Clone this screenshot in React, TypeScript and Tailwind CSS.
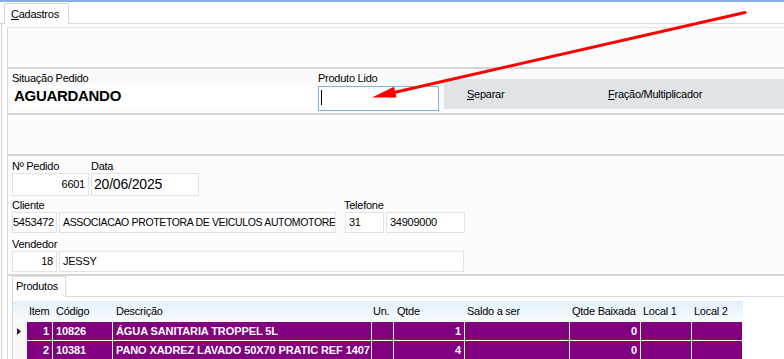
import React from 'react'

const line = 'border-[#d9d9d9]'

function Field(props: { className: string; children?: React.ReactNode }) {
  return (
    <div className={`border border-[#e3e3e3] bg-white overflow-hidden whitespace-nowrap flex items-center ${props.className}`}>
      {props.children}
    </div>
  )
}

const cols = 'grid grid-cols-[13px_26px_60px_259px_22px_71px_105px_71px_51px_51px]'

const rows = [
  { item: '1', codigo: '10826', descricao: 'ÁGUA SANITARIA TROPPEL 5L', qtde: '1', baixada: '0', current: true },
  { item: '2', codigo: '10381', descricao: 'PANO XADREZ LAVADO 50X70 PRATIC REF 1407', qtde: '4', baixada: '0', current: false },
]

export default function App() {
  return (
    <div className="relative w-[784px] h-[359px] overflow-hidden bg-white text-black text-[11px] tracking-[-0.25px] font-['Liberation_Sans',Arial,sans-serif] flex flex-col">
      <div className="h-[2px] bg-[#86b1dc] shrink-0" />

      {/* main tab strip */}
      <div className={`h-[22px] shrink-0 flex items-end pl-[4px] border-b ${line}`}>
        <div className={`h-[21px] w-[65px] -mb-px bg-white border-l border-t border-r ${line} pl-[6px] leading-[20px]`}>
          <span className="underline underline-offset-[1px]">C</span>adastros
        </div>
      </div>

      <div className={`flex-1 ml-[1px] border-l ${line} pl-[5px] pt-[3px] flex flex-col`}>
        <div className={`flex-1 border-l ${line} flex flex-col`}>
          {/* panel A */}
          <div className="h-[42px] shrink-0 border-t border-[#e4e4e4] border-b-2 border-b-[#d6d6d6] bg-[#fcfcfc]" />

          {/* panel B */}
          <div className="h-[46px] shrink-0 border-b-2 border-[#d6d6d6] bg-[#fafafa] flex">
            <div className="w-[310px] pl-[4px] pt-[2px] flex flex-col">
              <div className="h-[14px] leading-[14px]">Situação Pedido</div>
              <div className="h-[26px] w-[304px] bg-white pl-[2px] pt-[1px] leading-[20px] text-[15px] font-bold tracking-[-0.3px]">
                AGUARDANDO
              </div>
            </div>
            <div className="w-[121px] pt-[2px] flex flex-col">
              <div className="h-[14px] leading-[14px]">Produto Lido</div>
              <div className="mt-[1px] h-[25px] border border-[#7ab6ea] bg-white pl-[2px] pt-[3px]">
                <div className="w-px h-[15px] bg-black" />
              </div>
            </div>
            <div className="ml-[5px] mt-[10px] h-[30px] flex-1 bg-[#e1e4e7] flex items-center">
              <div className="w-[164px] pl-[23px]">
                <span className="underline underline-offset-[1px]">S</span>eparar
              </div>
              <div>
                <span className="underline underline-offset-[1px]">F</span>ração/Multiplicador
              </div>
            </div>
          </div>

          {/* panel C */}
          <div className="h-[41px] shrink-0 border-b-2 border-[#d6d6d6] bg-[#fcfcfc]" />

          {/* panel D */}
          <div className="h-[120px] shrink-0 border-b-2 border-[#d6d6d6] bg-[#fcfcfc] pl-[4px] pt-[3px] flex flex-col">
            <div className="flex gap-[2px]">
              <div className="flex flex-col">
                <div className="h-[14px] leading-[14px]">Nº Pedido</div>
                <Field className="w-[77px] h-[23px] justify-end pr-[3px]">6601</Field>
              </div>
              <div className="flex flex-col">
                <div className="h-[14px] leading-[14px]">Data</div>
                <Field className="w-[108px] h-[23px] pl-[2px] text-[14px] tracking-[-0.2px]">20/06/2025</Field>
              </div>
            </div>
            <div className="mt-[3px] flex">
              <div className="flex flex-col">
                <div className="h-[13px] leading-[13px]">Cliente</div>
                <div className="flex gap-[2px]">
                  <Field className="w-[45px] h-[21px] justify-end pr-[2px]">65453472</Field>
                  <Field className="w-[277px] h-[21px] pl-[3px] text-[10.5px] tracking-[-0.35px]">ASSOCIACAO PROTETORA DE VEICULOS AUTOMOTORES</Field>
                </div>
              </div>
              <div className="ml-[9px] flex flex-col">
                <div className="h-[13px] leading-[13px] -ml-px">Telefone</div>
                <div className="flex gap-[2px]">
                  <Field className="w-[39px] h-[21px] pl-[3px]">31</Field>
                  <Field className="w-[79px] h-[21px] pl-[3px]">34909000</Field>
                </div>
              </div>
            </div>
            <div className="mt-[5px] flex flex-col">
              <div className="h-[13px] leading-[13px]">Vendedor</div>
              <div className="flex gap-[2px]">
                <Field className="w-[45px] h-[21px] justify-end pr-[3px]">18</Field>
                <Field className="w-[405px] h-[21px] pl-[3px]">JESSY</Field>
              </div>
            </div>
          </div>

          {/* produtos */}
          <div className="ml-[4px] flex-1 flex flex-col">
            <div className={`h-[21px] shrink-0 flex items-end border-b ${line}`}>
              <div className={`h-[21px] w-[54px] -mb-px bg-white border-l border-t border-r ${line} pl-[3px] leading-[19px]`}>
                Produtos
              </div>
            </div>
            <div className={`flex-1 border-l ${line} pt-[4px]`}>
              <div className="w-[730px]">
                <div className={`${cols} h-[21px] bg-gradient-to-b from-[#e2f0fb] to-[#fafdff] items-center`}>
                  <div />
                  <div className="pl-[3px]">Item</div>
                  <div className="pl-[4px]">Código</div>
                  <div className="pl-[4px]">Descrição</div>
                  <div className="pl-[2px]">Un.</div>
                  <div className="pl-[4px]">Qtde</div>
                  <div className="pl-[3px]">Saldo a ser</div>
                  <div className="pl-[3px]">Qtde Baixada</div>
                  <div className="pl-[3px]">Local 1</div>
                  <div className="pl-[3px]">Local 2</div>
                </div>
                {rows.map((r) => (
                  <div key={r.item} className={`${cols} h-[19px] border-b border-white text-white font-bold tracking-[-0.1px] leading-[18px]`}>
                    <div className="bg-[#f7f7f7] flex items-center pl-[4px]">
                      {r.current && (
                        <svg width="4" height="7" viewBox="0 0 4 7">
                          <path d="M0 0 L4 3.5 L0 7 Z" fill="#222" />
                        </svg>
                      )}
                    </div>
                    <div className="bg-[#800080] border-l border-white text-right pr-[3px]">{r.item}</div>
                    <div className="bg-[#800080] border-l border-white pl-[3px]">{r.codigo}</div>
                    <div className="bg-[#800080] border-l border-white pl-[3px] whitespace-nowrap overflow-hidden">{r.descricao}</div>
                    <div className="bg-[#800080] border-l border-white" />
                    <div className="bg-[#800080] border-l border-white text-right pr-[3px]">{r.qtde}</div>
                    <div className="bg-[#800080] border-l border-white" />
                    <div className="bg-[#800080] border-l border-white text-right pr-[3px]">{r.baixada}</div>
                    <div className="bg-[#800080] border-l border-white" />
                    <div className="bg-[#800080] border-l border-white" />
                  </div>
                ))}
              </div>
            </div>
          </div>
        </div>
      </div>

      {/* annotation arrow */}
      <svg className="absolute inset-0 pointer-events-none" width="784" height="359">
        <line x1="745" y1="12.5" x2="394" y2="92.5" stroke="#ff0000" strokeWidth="3" strokeLinecap="round" />
        <polygon points="372,97.5 396.5,97.5 394,86.8" fill="#ff0000" />
      </svg>
    </div>
  )
}
